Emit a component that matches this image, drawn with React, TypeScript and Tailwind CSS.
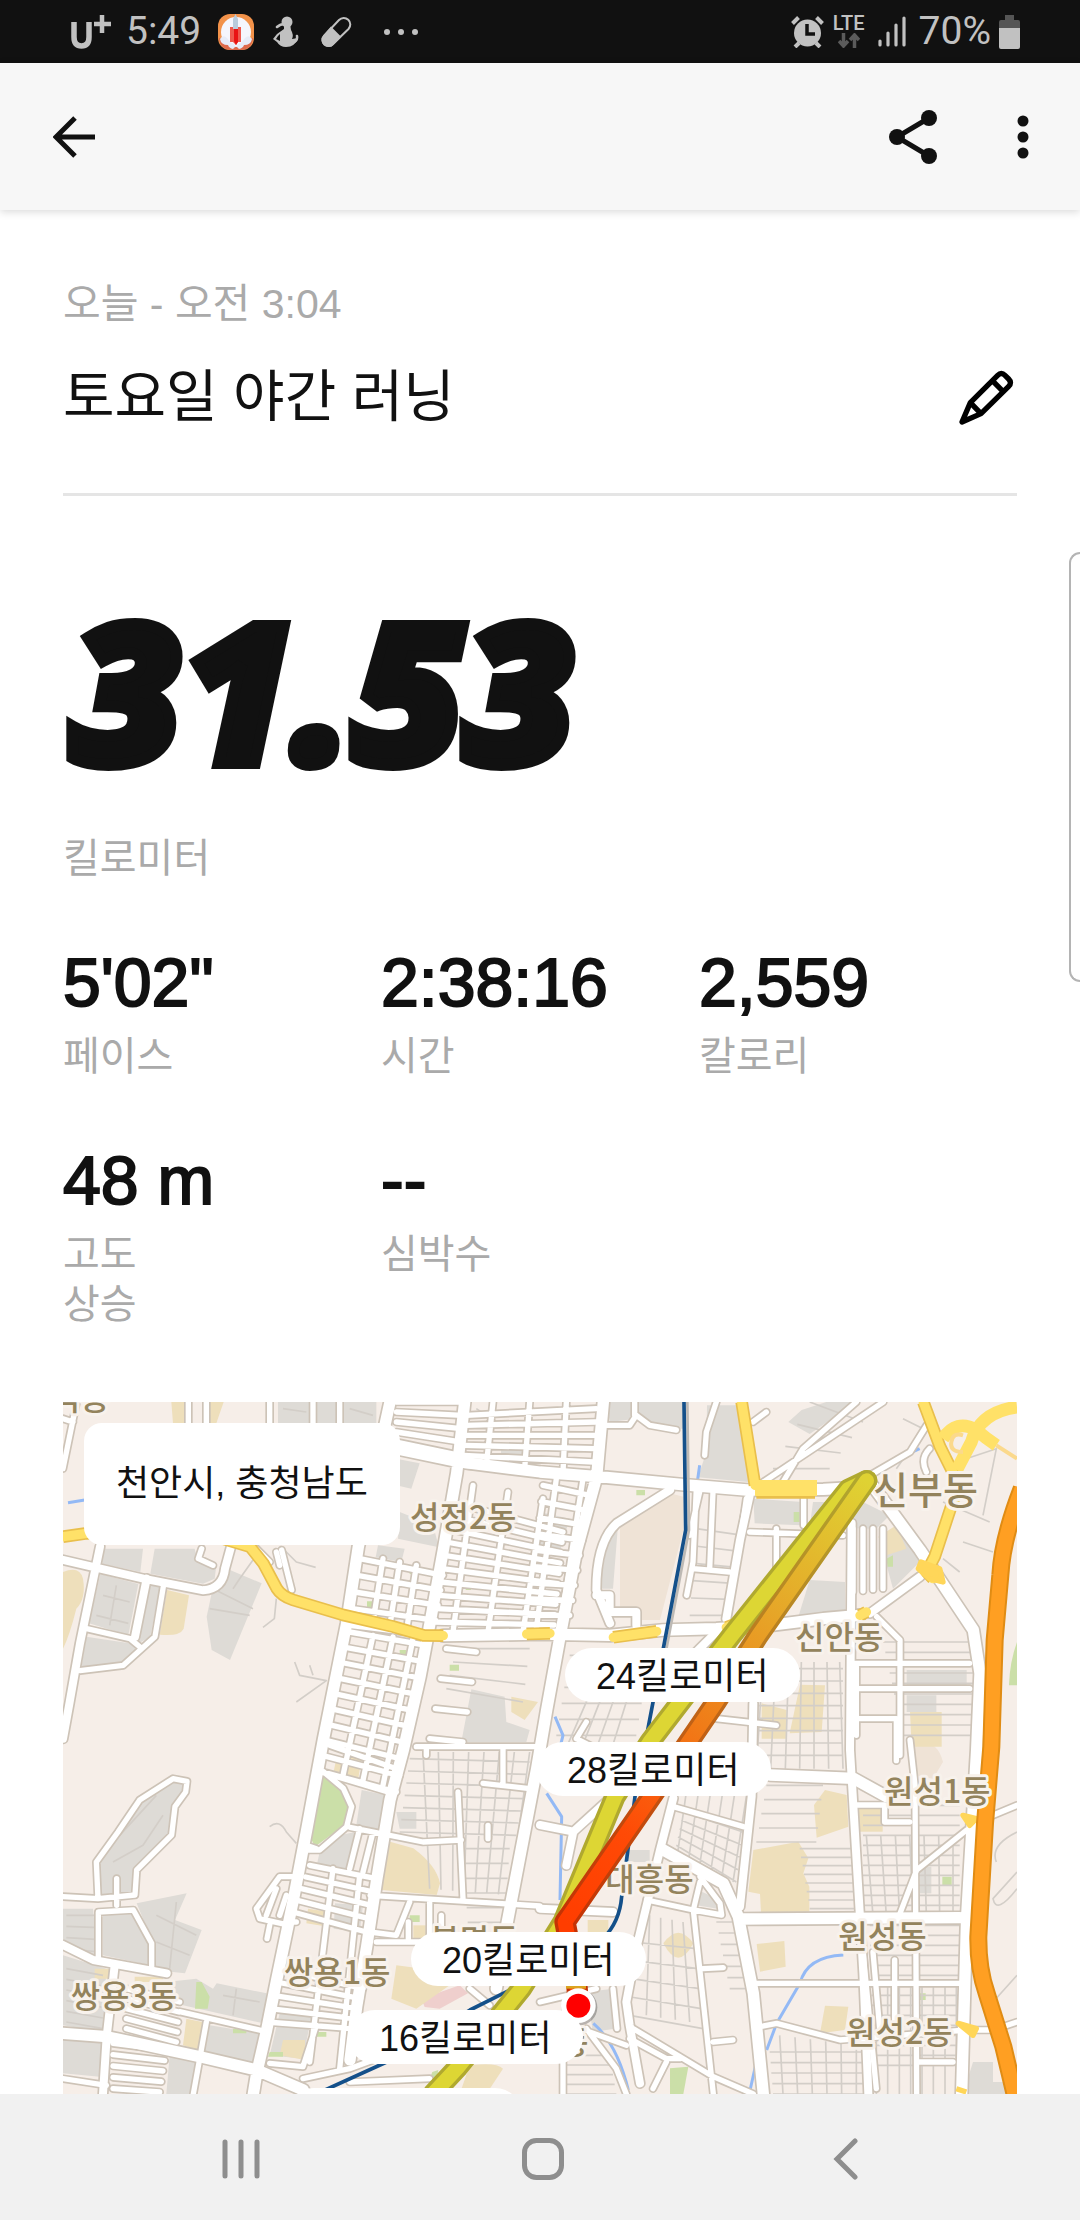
import type { ReactNode } from 'react'

type Pt = [number, number]

const line = (...pts: Pt[]): string => 'M' + pts.map((p) => p.join(' ')).join('L')

// n + 1 streets running from side a0-a1 over to side b0-b1
const rungs = (a0: Pt, a1: Pt, b0: Pt, b1: Pt, n: number): string => {
  let d = ''
  for (let i = 0; i <= n; i++) {
    const t = i / n
    const mix = (p: Pt, q: Pt): Pt => [
      Math.round(p[0] + (q[0] - p[0]) * t),
      Math.round(p[1] + (q[1] - p[1]) * t),
    ]
    d += line(mix(a0, a1), mix(b0, b1))
  }
  return d
}

const greyAreas = [
  'M501 504L596 544L501 774L446 744L431 644L446 574Z',
  'M118 440L240 440L232 510L118 485Z',
  'M275 440L395 440L405 480L460 490L455 530L420 545L262 515Z',
  'M112 516L226 546L196 700L78 664Z',
  'M256 548L290 556L262 704L224 726Z',
  'M70 704L200 724L222 744L180 780L55 796Z',
  'M645 0H740V64H645ZM760 0H820V64H760ZM840 0H940V64H840Z',
  'M1000 170L1070 184L1045 260L1000 250ZM945 430L1025 440L1015 480L938 466ZM1010 330L1110 370L1128 436L1005 410Z',
  'M1314 134H1384V176H1314ZM1225 862L1325 884L1330 960L1400 984L1390 1020H1195Z',
  'M1631 0H1860V80H1780L1720 50L1640 60Z',
  'M1932 10H2036L2056 240L1905 226L1930 150Z',
  'M2216 24L2290 0H2380L2240 96L2176 60Z',
  'M2071 290L2220 300L2215 370L2075 364ZM2250 300L2400 300L2480 340L2440 380L2240 376Z',
  'M2240 534L2346 540V650L2200 664Z',
  'M1431 330L1520 350L1490 450L1431 430ZM1640 370L1665 370L1650 560L1610 560Z',
  'M2460 450L2520 400L2570 480L2490 560Z',
  'M2531 804H2711V850H2531ZM2531 880H2620V930H2531Z',
  'M105 1484L110 1380L165 1290L235 1200L335 1130L368 1145L335 1210L325 1290L222 1400L210 1480Z',
  'M221 1504L371 1474L336 1554L416 1584L366 1714L271 1704L266 1614Z',
  'M0 1520L90 1520L105 1664L50 1654L0 1610Z',
  'M120 1534L210 1534L264 1630L262 1690L120 1660Z',
  'M0 1660L130 1700L120 1890L0 1870Z',
  'M461 1744L611 1774L601 1864L360 1810L310 1740L400 1730L450 1760Z',
  'M440 1870L590 1894L575 1990L425 1950Z',
  'M0 1910L120 1920L110 2024L0 2014ZM320 1960L400 1970L380 2076H310Z',
  'M650 1834L745 1844L720 1970L620 1960Z',
  'M896 1164L971 1180L950 1290L880 1270ZM830 1300L876 1290L860 1410L760 1396L770 1350Z',
  'M816 1504L900 1510L890 1590L812 1580Z',
  'M1000 1230H1060V1280H1010ZM1700 1344H1760V1380H1690Z',
  'M1570 1770L1650 1760L1655 1880L1590 1890Z',
  'M1900 1464Q1960 1480 1965 1520L1900 1510Z',
  'M2730 1980H2790V2040H2862V2076H2700Z',
  'M2571 1394H2605V1474H2571Z',
]

const tanAreas = [
  'M325 0H376V64H330ZM436 0H482L460 64H436Z',
  'M312 564L378 580L362 680Q350 704 290 698Z',
  'M0 510Q50 490 60 530Q70 590 40 620Q20 700 0 740Z',
  'M1345 884L1425 900L1385 954L1345 930Z',
  'M2446 404L2500 370L2530 440L2470 460Z',
  'M2096 904L2171 924V1010H2096ZM2211 848L2286 850L2276 990L2180 994Z',
  'M2541 930H2636V1034H2546Z',
  'M2286 1164L2351 1179L2356 1274L2261 1307L2253 1209Z',
  'M2071 1344L2206 1319L2236 1369L2221 1414L2239 1454V1532H2094L2091 1476L2056 1469Z',
  'M2386 1219H2459V1289H2386Z',
  'M1801 1624Q1846 1560 1891 1624Q1846 1710 1801 1624Z',
  'M2081 1626L2164 1617L2168 1694L2091 1709Z',
  'M2286 1811L2356 1814L2346 1884L2271 1894Z',
  'M1574 1554H1636V1614H1574Z',
  'M821 1064L896 1069L886 1129L811 1114Z',
  'M981 1319L1051 1339Q1120 1390 1131 1444L1121 1479L956 1464Z',
  'M735 1520L800 1530L795 1574L730 1564Z',
  'M1051 1570H1090V1620H1051Z',
  'M1000 1690L1080 1700L1160 1750L1060 1820L985 1790Z',
  'M370 1850L418 1860L405 1944L360 1930Z',
  'M95 1700H155V1730H95ZM215 1724H300V1740H215Z',
  'M660 1914H726V1974L650 1960Z',
  'M1220 1990Q1300 1980 1320 2000L1270 2076H1190Z',
]

const greenAreas = [
  'M781 1124L841 1164L866 1214L851 1264L756 1334L741 1304Z',
  'M1040 496H1062V516H1040ZM912 598H936V620H912ZM1010 744H1030V770H1010ZM1160 788H1188V806H1160ZM1208 550H1224V564H1208Z',
  'M1720 264H1746V280H1720ZM2192 330H2210V360H2192ZM2470 470L2490 460V494H2474Z',
  'M1821 1999L1876 1994L1861 2076H1821Z',
  'M400 1740H416L440 1784L434 1820H396ZM510 1880H550V1894H510Z',
  'M620 1950H660V1964H615ZM760 1890H790V1904H760ZM1040 1540H1070V1560H1040Z',
  'M2638 1424H2666V1450H2638ZM2571 1774H2588V1794H2571Z',
  'M2862 720Q2840 780 2838 850L2862 850Z',
  'M1108 2010L1126 2004L1120 2040L1100 2030Z',
]

const lanes =
  rungs([2070, 800], [2060, 1060], [2340, 800], [2340, 1060], 7) +
  rungs([2100, 780], [2330, 780], [2080, 1100], [2340, 1100], 6) +
  rungs([2400, 1210], [2400, 1540], [2690, 1210], [2690, 1540], 11) +
  rungs([2410, 1300], [2670, 1300], [2430, 1540], [2670, 1540], 6) +
  rungs([2420, 1570], [2430, 1990], [2690, 1570], [2690, 1990], 14) +
  rungs([2440, 1740], [2680, 1740], [2440, 2076], [2680, 2076], 7) +
  rungs([2120, 1950], [2130, 2076], [2400, 1950], [2400, 2076], 4) +
  rungs([2150, 1900], [2380, 1930], [2160, 2076], [2380, 2076], 5) +
  rungs([2210, 1340], [2240, 1520], [2380, 1340], [2390, 1520], 7) +
  rungs([1500, 1960], [1500, 2076], [1640, 1960], [1660, 2076], 4) +
  rungs([1710, 1620], [1700, 1840], [1900, 1640], [1920, 1880], 4) +
  rungs([1760, 1540], [1860, 1560], [1750, 1840], [1880, 1860], 3) +
  rungs([1960, 1560], [2000, 1760], [2020, 1560], [2060, 1760], 6) +
  rungs([1040, 1070], [1010, 1290], [1400, 1080], [1360, 1300], 6) +
  rungs([1080, 1050], [1400, 1050], [1100, 1460], [1340, 1480], 7) +
  rungs([1200, 1340], [1220, 1650], [1340, 1340], [1320, 1650], 7) +
  rungs([1860, 1230], [1840, 1330], [2040, 1290], [2020, 1440], 4) +
  rungs([1880, 1100], [2060, 1120], [1840, 1380], [2010, 1440], 5) +
  rungs([2110, 1150], [2080, 1320], [2280, 1150], [2260, 1320], 4) +
  rungs([2460, 720], [2520, 1000], [2730, 720], [2730, 1000], 9) +
  rungs([1900, 380], [1880, 640], [2040, 400], [1990, 640], 5) +
  rungs([2240, 0], [2130, 200], [2400, 60], [2300, 200], 3) +
  rungs([1520, 760], [1480, 1000], [1760, 760], [1720, 1000], 5) +
  rungs([1640, 740], [1740, 740], [1500, 1060], [1640, 1060], 3) +
  rungs([1180, 740], [1150, 860], [1400, 740], [1380, 900], 3) +
  rungs([10, 1540], [10, 1640], [110, 1540], [110, 1650], 3) +
  rungs([10, 1700], [10, 1860], [120, 1720], [120, 1880], 5) +
  'M2600 60L2500 200M2520 50L2600 90M2680 180L2800 140L2760 340M2640 300L2780 360M2700 420L2790 450M2640 470L2690 510' +
  'M570 474L530 530L510 560M664 444L700 480L758 496M640 590L634 650L600 676M695 780L710 820L790 836L700 900M740 790L750 820' +
  'M620 1274Q650 1250 670 1290L700 1324M2862 1290Q2780 1330 2800 1380M2862 1410L2790 1490Q2800 1540 2862 1460M2862 1720L2790 1800' +
  'M120 580L200 600M100 640L196 664M160 550L140 670M440 620L560 640M450 560L570 620M1240 20L1300 60M660 20L730 30M860 20L930 40' +
  'M170 1300L280 1180M150 1380L240 1330L300 1240M280 1540L400 1600M280 1620L380 1660M340 1500L320 1700M480 1780L590 1800M520 1760L510 1840'

const smallRoads =
  rungs([890, 470], [860, 670], [1140, 520], [1110, 700], 4) +
  rungs([960, 470], [1060, 490], [930, 660], [1030, 690], 2) +
  rungs([860, 690], [780, 1110], [1090, 730], [1000, 1170], 9) +
  rungs([930, 700], [1050, 710], [840, 1120], [960, 1150], 2) +
  rungs([1165, 300], [1110, 700], [1500, 390], [1470, 700], 10) +
  rungs([1230, 250], [1440, 290], [1170, 690], [1380, 690], 2) +
  rungs([1000, 0], [1000, 120], [1200, 0], [1190, 160], 4) +
  rungs([1210, 40], [1200, 190], [1600, 20], [1590, 220], 5) +
  rungs([1290, 0], [1510, 0], [1270, 190], [1500, 210], 2) +
  rungs([1440, 250], [1400, 640], [1580, 280], [1520, 640], 8) +
  rungs([1480, 230], [1560, 230], [1420, 680], [1490, 690], 1) +
  rungs([1150, 740], [1100, 1010], [1240, 750], [1200, 1020], 3) +
  rungs([740, 1390], [690, 1530], [940, 1430], [910, 1590], 4) +
  rungs([650, 1700], [610, 1860], [900, 1760], [870, 1880], 4) +
  rungs([730, 1330], [670, 1560], [760, 1340], [700, 1560], 1) +
  rungs([810, 1400], [890, 1420], [740, 1980], [830, 2000], 1) +
  rungs([890, 1280], [930, 1290], [860, 1400], [900, 1410], 1) +
  rungs([150, 1924], [150, 2060], [310, 1944], [290, 2070], 4) +
  rungs([190, 1760], [190, 1880], [350, 1800], [340, 1920], 4) +
  rungs([2370, 380], [2460, 380], [2370, 570], [2460, 560], 3) +
  rungs([1910, 270], [2050, 290], [1880, 400], [2030, 430], 1) +
  'M2400 1650L2440 2060M2376 784H2720M2380 794V1000M2376 860H2720M2376 950H2500V1076M2441 644L2511 714V1060' +
  'M1960 0L1930 90L1925 160M1631 70H1700L1720 40L1760 70L1840 84M1715 0V40' +
  'M1900 260L1890 480L1871 580M1890 500L2000 510M1950 270L1940 500M2060 390L2340 400M2140 380V540M2222 290V370' +
  'M2461 0L2101 240M2380 0L2220 140L2160 240M2421 220L2541 150L2591 70M2600 140Q2570 170 2590 210M2070 60L2110 30' +
  'M656 444L686 564M580 440L620 480M640 450L650 490M416 440L406 470L450 490' +
  'M41 0L0 200M0 50L30 60M376 0V64M430 0V64M620 0V64M750 0V64M830 0V64' +
  'M1831 1214L2041 1274M1891 1524L1951 2076M1751 1494L1891 1524L1976 1539L1971 1504L1911 1424M1891 1524L1911 1440' +
  'M1920 1700L1981 1697M1950 1920L2010 1914M1701 1874L1951 2024L2071 2076M1700 1910L1810 1970L1850 1970M1810 1980L1770 2060' +
  'M2711 1284L2561 1404L2511 1534M2541 1014L2556 1150L2561 2076M2380 1209H2465V1260H2540M2495 1674V1860M2430 1650L2450 1880' +
  'M2091 1874L2141 1864L2331 1914L2711 1884H2790L2862 1860M2570 1980H2670M2790 1240L2862 1210M2071 1744H2691' +
  'M1580 1890L1690 1930M1431 1800L1600 1760M1570 1880L1660 2000L1690 2076M1500 1960V2076M1650 1760L1662 1880' +
  'M105 1490L100 1380L165 1290L230 1194L330 1130L372 1138L368 1170L336 1214L326 1299L221 1404L216 1479L105 1490L0 1484' +
  'M106 1670V1530L211 1524L266 1624V1704M161 1430V1510' +
  'M781 1109L841 1159L866 1214L851 1274L770 1344L720 1344M861 1276L1080 1320L1195 1314M1185 1170L1200 1490' +
  'M771 1109L990 1174M800 1030L1000 1100M921 1480L1431 1512M1060 1034H1431M1090 1034V1060M1320 1040V1150M1260 1144L1400 1160M1275 1270V1310' +
  'M690 1424H650L580 1520L590 1550L680 1570M640 1460L610 1540M670 1480L650 1540M620 1570L612 1610' +
  'M920 1590L1000 1600L1040 1500M1100 1500V1620L940 1620M1036 1560V1620M1135 1540V1580' +
  'M350 1829L610 1889M430 1860L391 2076M620 1984L720 1994L760 1870M720 2030L860 2000L1050 1930M1220 1760L1280 1810M860 2040L1100 2030' +
  'M71 680L201 710L231 735M301 554L276 704L181 790L51 806M0 2030L130 2050' +
  'M1540 1010L1640 1060M1570 960L1540 1010M1960 950L2140 970'

const midRoads =
  'M0 474L241 530L421 565Q480 560 486 500L505 430M111 434L51 724L20 900L0 1010M251 530L216 704' +
  'M1821 264L1661 364Q1600 420 1600 564L1641 664M2060 280L2031 414L1990 650M1600 580H1640V630H1720V670' +
  'M2571 524L2421 634M2366 364L2361 1044L2401 1714L2416 2076M2071 904L2066 1184L2031 1514' +
  'M1831 1189L1791 1344L1721 1634L1690 1800L1700 1870L1731 2044M1431 1269L1531 1289L1640 1190M1431 1520L1650 1530' +
  'M0 1629L91 1674L311 1714M155 1690L131 1904L120 2076M1960 690L1880 770M1531 1289L1510 1390'

const mainRoads =
  'M981 0L886 434L851 664L821 814L781 1014L731 1284L691 1494L641 1734L611 1884L581 2014L571 2076' +
  'M1205 0L1181 214L1141 444L1101 664L1071 824L1021 1044L981 1194L941 1434L911 1634L881 1814L861 1974' +
  'M1621 0L1601 224L1541 444L1491 704L1451 924L1421 1100L1331 1570L1300 1760' +
  'M1000 140L1191 180L1431 210L1631 226L1871 249L2051 264L2281 262L2431 254L2571 444L2731 684L2751 814L2741 1044L2711 1544L2696 2076' +
  'M1141 701L1431 696L1641 700L1800 684L1960 680L2131 669L2281 650L2391 640' +
  'M2121 1119L2371 1129L2471 1184M1801 1344L1981 1444L2026 1544L2071 1774L2101 2076M2031 1551L2691 1547' +
  'M0 1894L131 1904L411 1964L581 2004L721 2064'

const yellowRoads =
  'M0 404L71 394L380 380L561 434L601 484L641 559Q655 582 691 594L841 639L991 674L1081 700L1141 701M1391 696L1461 694' +
  'M1651 706L1781 688M1990 676L2020 665M2036 0L2076 250M2581 0L2631 134L2671 214V294L2615 464L2591 510L2610 530M2391 640L2410 630'

const dongs = [
  { x: -125, y: 24, name: '백석동' },
  { x: 1041, y: 381, name: '성정2동' },
  { x: 2196, y: 741, name: '신안동' },
  { x: 663, y: 1747, name: '쌍용1동' },
  { x: 23, y: 1819, name: '쌍용3동' },
  { x: 1627, y: 1467, name: '대흥동' },
  { x: 2463, y: 1202, name: '원성1동' },
  { x: 2326, y: 1639, name: '원성동' },
  { x: 2349, y: 1927, name: '원성2동' },
  { x: 1102, y: 1650, name: '봉명동' },
  { x: 1488, y: 1957, name: '동' },
]

const outbound = 'M2411 236L2356 262L2006 700L1761 1019L1656 1184L1500 1560L1376 1759L1186 1994L1110 2076'
const inbound = 'M2411 236L2086 700L1959 900L1761 1190L1506 1560L1541 1740L1546 1810'
const highway = 'M2876 260Q2818 410 2812 520L2795 714L2785 1034L2766 1264L2746 1604Q2745 1700 2771 1774L2821 1934L2858 2090'

function MapCanvas(): ReactNode {
  return (
    <svg viewBox="0 0 2862 2076" preserveAspectRatio="xMidYMin slice" className="block h-full w-full" aria-hidden="true">
      <defs>
        <linearGradient id="pace" gradientUnits="userSpaceOnUse" x1="2411" y1="236" x2="1506" y2="1560">
          <stop offset="0" stopColor="#dfd233" />
          <stop offset="0.3" stopColor="#e6a628" />
          <stop offset="0.55" stopColor="#f07c18" />
          <stop offset="0.8" stopColor="#ff4a06" />
          <stop offset="1" stopColor="#ff3d00" />
        </linearGradient>
        <linearGradient id="paceEdge" gradientUnits="userSpaceOnUse" x1="2411" y1="236" x2="1506" y2="1560">
          <stop offset="0" stopColor="#b0a92f" />
          <stop offset="0.3" stopColor="#b98422" />
          <stop offset="0.55" stopColor="#c06216" />
          <stop offset="1" stopColor="#c43204" />
        </linearGradient>
      </defs>
      <rect width="2862" height="2076" fill="#f6eee8" />
      <g fill="#dedbd6">{greyAreas.map((d) => <path key={d} d={d} />)}</g>
      <path d="M1671 364L1821 274L1861 284V384L1791 654L1731 654L1671 614ZM2540 1030Q2620 1000 2640 1080L2610 1130L2560 1120Z" fill="#efe3d6" />
      <path d="M1075 1790L1190 1750L1215 1774L1130 1820L1085 1815Z" fill="#efcfcd" />
      <g fill="#eedfbb">{tanAreas.map((d) => <path key={d} d={d} />)}</g>
      <g fill="#cbdfa8">{greenAreas.map((d) => <path key={d} d={d} />)}</g>
      <g fill="none" strokeLinejoin="round">
        <path d={lanes} stroke="#d3cec8" strokeWidth="5" />
        <path
          d="M2341 1659Q2231 1664 2211 1744L2141 1864L2111 1944M2080 1980L2060 2070M1451 1174L1496 1244L1491 1494M1591 1864Q1661 1924 1696 2064M1910 190L1900 260M2440 200L2570 140M15 302L65 294M1476 944L1500 1000L1490 1040"
          stroke="#93b9f5"
          strokeWidth="9"
        />
        <g stroke="#cdc3b7" strokeLinecap="round">
          <path d={smallRoads} strokeWidth="26" />
          <path d={midRoads} strokeWidth="34" />
          <path d={mainRoads} strokeWidth="44" />
        </g>
        <g stroke="#fff" strokeLinecap="round">
          <path d={smallRoads} strokeWidth="16" />
          <path d={midRoads} strokeWidth="24" />
          <path d={mainRoads} strokeWidth="34" />
        </g>
        <path d={yellowRoads} stroke="#e9bf4c" strokeWidth="38" />
        <path d={yellowRoads} stroke="#ffe168" strokeWidth="28" strokeLinecap="round" />
        <path d="M2080 262H2256" stroke="#e9bf4c" strokeWidth="56" />
        <path d="M2862 15Q2750 30 2725 120L2681 204M2640 110Q2680 50 2740 84Q2770 110 2800 130" stroke="#ffe168" strokeWidth="38" />
        <path d="M2800 130L2862 170M2700 100Q2670 90 2665 120T2700 150" stroke="#fbd98c" strokeWidth="12" />
        <path d="M2076 258H2262" stroke="#ffe168" strokeWidth="48" />
        <path d="M2574 480L2630 500L2640 540L2600 530L2566 500ZM2700 1240L2740 1250L2720 1270ZM2686 1864L2740 1880L2730 1900ZM2680 2060L2710 2070" fill="#ffd659" stroke="#ffd659" strokeWidth="16" />
        <path d="M1873 0L1878 384L1780 900" stroke="#bdb9b4" strokeWidth="8" />
        <path d="M1863 0L1868 384L1801 739L1756 974L1716 1184L1676 1484Q1670 1560 1620 1610Q1500 1700 1351 1759L1221 1824L971 1980L760 2076" stroke="#14508a" strokeWidth="11" />
        <path d={highway} stroke="#e08c14" strokeWidth="54" />
        <path d={highway} stroke="#ff9f22" strokeWidth="42" />
      </g>
      <g
        fill="#93835c"
        stroke="#f8f2ec"
        strokeWidth="18"
        strokeLinejoin="round"
        paintOrder="stroke"
        className="font-['Noto_Sans_CJK_KR',sans-serif] font-medium"
      >
        {dongs.map((d) => (
          <text key={d.name} x={d.x} y={d.y} fontSize="96">
            {d.name}
          </text>
        ))}
        <text x="2430" y="307" fontSize="114">
          신부동
        </text>
      </g>
      <g fill="none" strokeLinecap="round" strokeLinejoin="round">
        <path d={outbound} stroke="#b0a92f" strokeWidth="64" />
        <path d={outbound} stroke="#ddd634" strokeWidth="44" />
        <path d={inbound} stroke="url(#paceEdge)" strokeWidth="64" />
        <path d={inbound} stroke="url(#pace)" strokeWidth="44" />
      </g>
      <path d="M1539 1720V1760" stroke="#dba420" strokeWidth="60" />
      <circle cx="1549" cy="1816" r="54" fill="#000" opacity="0.25" />
      <circle cx="1546" cy="1811" r="52" fill="#fff" />
      <circle cx="1546" cy="1811" r="36" fill="#f00" />
    </svg>
  )
}

function Splits(): ReactNode {
  const pill = "absolute flex h-[54px] items-center rounded-full bg-white px-[31px] pt-1 text-4xl whitespace-nowrap text-[#111]"
  return (
    <>
      <span className={`${pill} top-[246px] left-[502px]`}>24킬로미터</span>
      <span className={`${pill} top-[340px] left-[473px]`}>28킬로미터</span>
      <span className={`${pill} top-[530px] left-[348px]`}>20킬로미터</span>
      <span className={`${pill} top-[608px] left-[285px]`}>16킬로미터</span>
      <span className={`${pill} top-[686px] left-[224px]`}>12킬로미터</span>
    </>
  )
}

function StatusBar(): ReactNode {
  return (
    <div className="flex h-[63px] shrink-0 items-center justify-between bg-[#111] pr-[60px] pl-[71px] font-[Roboto,sans-serif] text-[39px] text-[#c1c1c1]">
      <div className="flex items-center">
        <svg width="40" height="34" viewBox="0 0 40 34" fill="none" stroke="currentColor" aria-label="U+" className="mr-[15px]">
          <path d="M3 7v15q0 9 7.500 9t7.500-9V7" strokeWidth="5.500" />
          <path d="M31 0v18M23 9h17" strokeWidth="4.500" />
        </svg>
        <span className="mr-[17px]">5:49</span>
        <svg width="36" height="36" viewBox="0 0 36 36" className="mr-[19px]">
          <rect width="36" height="36" rx="12" fill="#f2924a" />
          <path d="M1 24h34q-1 12-13 12h-8Q2 36 1 24Z" fill="#dd6a4c" />
          <circle cx="18" cy="18" r="15" fill="#f5f6fd" />
          <path d="M12 13h11v15h-3l-2 3-3-3h-3Z" fill="#ee5a4e" />
          <path d="M16 15h4v13l-2 3-2-4Z" fill="#e91313" />
          <path d="M15 15V5l2.500-5L20 5v10Z" fill="#b9cbdc" />
          <path d="M2 25q3-5 7-1l4 5q4 0 4 4l-2 2q-4-1-5-4-7 0-8-6ZM34 25q-3-5-7-1l-4 5q-4 0-4 4l2 2q4-1 5-4 7 0 8-6Z" fill="#e7ecf8" />
        </svg>
        <svg width="26" height="31" viewBox="0 0 26 31" fill="currentColor" className="mr-[22px]">
          <circle cx="14" cy="6" r="5.500" />
          <path d="M11 8h6l1 6q3 5 1 9l6-1q-3 9-12 9-6 0-9-5l-4-3 4-5 7-5Z" />
          <path d="M4 11q3-3 8-3M19 27q6-2 5-7" fill="none" stroke="currentColor" strokeWidth="2.500" strokeLinecap="round" />
          <path d="M5 20l2-2v7l-4-2Z" fill="#111" />
        </svg>
        <svg width="31" height="32" viewBox="0 0 31 32" fill="none" stroke="currentColor" className="mr-[32px]">
          <path d="M3 20L18 4a6.500 6.500 0 0 1 9.500 9L12 28a6 6 0 0 1-9-8Z" strokeWidth="2" />
          <path d="M10 12L19 21L12 28a6 6 0 0 1-9-8Z" fill="currentColor" strokeWidth="2" />
        </svg>
        <svg width="34" height="6" viewBox="0 0 34 6" fill="currentColor">
          <circle cx="3" cy="3" r="3" />
          <circle cx="17" cy="3" r="3" />
          <circle cx="31" cy="3" r="3" />
        </svg>
      </div>
      <div className="flex items-center">
        <svg width="33" height="32" viewBox="0 0 33 32" stroke="currentColor" fill="none" className="mr-[9px]">
          <circle cx="16.500" cy="17" r="13.500" fill="currentColor" stroke="none" />
          <path d="M1.500 7.500L7.500 1.500M31.500 7.500L25.500 1.500M4 31L8 27M29 31L25 27" strokeWidth="4" />
          <path d="M16 8v10h8" stroke="#111" strokeWidth="3.500" />
        </svg>
        <div className="mr-[13px] flex flex-col items-center gap-[2px]">
          <span className="text-[20px] leading-[16px] font-medium">LTE</span>
          <svg width="22" height="15" viewBox="0 0 22 15" fill="none" stroke="#5b5b5b" strokeWidth="3.500">
            <path d="M5.500 0v12M1 8l4.500 5 4.500-5M16.500 15V3M12 7l4.500-5L21 7" />
          </svg>
        </div>
        <svg width="28" height="31" viewBox="0 0 28 31" stroke="currentColor" strokeWidth="3.200" strokeLinecap="round" className="mr-[13px]">
          <path d="M2 25v4M10 17v12M18 9v20M26 2v27" />
        </svg>
        <span className="mr-2">70%</span>
        <svg width="21" height="34" viewBox="0 0 21 34">
          <path d="M6 0h9v5h4q2 0 2 2v7H0V7q0-2 2-2h4Z" fill="#555" />
          <path d="M0 13h21v19q0 2-2 2H2q-2 0-2-2Z" fill="currentColor" />
        </svg>
      </div>
    </div>
  )
}

function AppBar(): ReactNode {
  return (
    <header className="relative z-10 flex h-[147px] shrink-0 items-center bg-[#f7f7f7] pr-[51px] pl-[53px] text-[#111] shadow-[0_2px_8px_rgba(0,0,0,0.15)]">
      <button type="button" aria-label="뒤로" className="mr-auto">
        <svg width="42" height="42" viewBox="0 0 42 42" fill="none" stroke="currentColor" strokeWidth="5">
          <path d="M42 21H4M22 2L3 21L22 40" />
        </svg>
      </button>
      <button type="button" aria-label="공유" className="mr-20">
        <svg width="48" height="54" viewBox="0 0 48 54" fill="currentColor">
          <path d="M40 8L8 27L40 46" fill="none" stroke="currentColor" strokeWidth="5" />
          <circle cx="40" cy="8" r="8" />
          <circle cx="8" cy="27" r="8" />
          <circle cx="40" cy="46" r="8" />
        </svg>
      </button>
      <button type="button" aria-label="더보기">
        <svg width="12" height="44" viewBox="0 0 12 44" fill="currentColor">
          <circle cx="6" cy="6" r="5.500" />
          <circle cx="6" cy="22" r="5.500" />
          <circle cx="6" cy="38" r="5.500" />
        </svg>
      </button>
    </header>
  )
}

function Stat({ value, children }: { value: string; children: ReactNode }): ReactNode {
  return (
    <div className="flex flex-col gap-[17px]">
      <dd className="order-1 text-[68px] leading-[64px] text-[#111] [-webkit-text-stroke:2px_#111]">{value}</dd>
      <dt className="order-2 text-[40px] leading-[50px] text-[#aaa]">{children}</dt>
    </div>
  )
}

export default function App(): ReactNode {
  return (
    <div className="flex h-screen flex-col overflow-hidden bg-white font-['Liberation_Sans','Noto_Sans_CJK_KR',sans-serif]">
      <StatusBar />
      <AppBar />

      <main className="relative flex min-h-0 flex-1 flex-col px-[63px] pt-[69px]">
        <p className="text-[41px] leading-[50px] text-[#aaa]">오늘 - 오전 3:04</p>
        <div className="mt-9 flex items-center justify-between">
          <h1 className="text-[56px] leading-[64px] text-[#111]">토요일 야간 러닝</h1>
          <button type="button" aria-label="이름 편집">
            <svg width="58" height="55" viewBox="0 0 174 165" fill="none" stroke="#000" strokeWidth="16" strokeLinejoin="round">
              <path d="M34 98L116 16Q127 5 138 16L149 27Q160 38 149 49L66 131L9 156Z" />
              <path d="M100 32L132 64M34 98L66 131" />
            </svg>
          </button>
        </div>
        <hr className="mt-16 border-t-[3px] border-[#e5e5e5]" />

        <p className="mt-[93px] pl-2 font-['Open_Sans',sans-serif] text-[192px] leading-[200px] font-extrabold text-[#111] italic [-webkit-text-stroke:12px_#111]">
          31.53
        </p>
        <p className="mt-11 text-[40px] leading-[50px] text-[#aaa]">킬로미터</p>

        <dl className="mt-[67px] grid grid-cols-3 gap-y-[67px]">
          <Stat value={'5\'02"'}>페이스</Stat>
          <Stat value="2:38:16">시간</Stat>
          <Stat value="2,559">칼로리</Stat>
          <Stat value="48 m">
            고도
            <br />
            상승
          </Stat>
          <Stat value="--">심박수</Stat>
        </dl>

        <section aria-label="경로" className="relative mt-[73px] min-h-0 flex-1 overflow-hidden">
          <MapCanvas />
          <span className="absolute top-[21px] left-[21px] flex h-[122px] items-center rounded-[18px] bg-white px-8 text-4xl whitespace-nowrap text-[#111]">
            천안시, 충청남도
          </span>
          <Splits />
        </section>

        {/* edge panel handle */}
        <div className="absolute top-[342px] right-0 h-[430px] w-[11px] rounded-l-[14px] border-2 border-r-0 border-[#b4b4b4] bg-white" />
      </main>

      <nav className="flex h-[126px] shrink-0 items-center justify-center gap-[260px] bg-[#f1f1f1] pt-1 pl-1.5 text-[#8e8e8e]">
        <button type="button" aria-label="최근 앱">
          <svg width="42" height="42" viewBox="0 0 42 42" stroke="currentColor" strokeWidth="5" strokeLinecap="round">
            <path d="M5 4v34M21 4v34M37 4v34" />
          </svg>
        </button>
        <button type="button" aria-label="홈">
          <svg width="42" height="42" viewBox="0 0 42 42" fill="none" stroke="currentColor" strokeWidth="5">
            <rect x="2.500" y="2.500" width="37" height="37" rx="12" />
          </svg>
        </button>
        <button type="button" aria-label="뒤로 가기">
          <svg width="42" height="42" viewBox="0 0 42 42" fill="none" stroke="currentColor" strokeWidth="5" strokeLinecap="round">
            <path d="M31 3L13 21L31 39" />
          </svg>
        </button>
      </nav>
    </div>
  )
}
